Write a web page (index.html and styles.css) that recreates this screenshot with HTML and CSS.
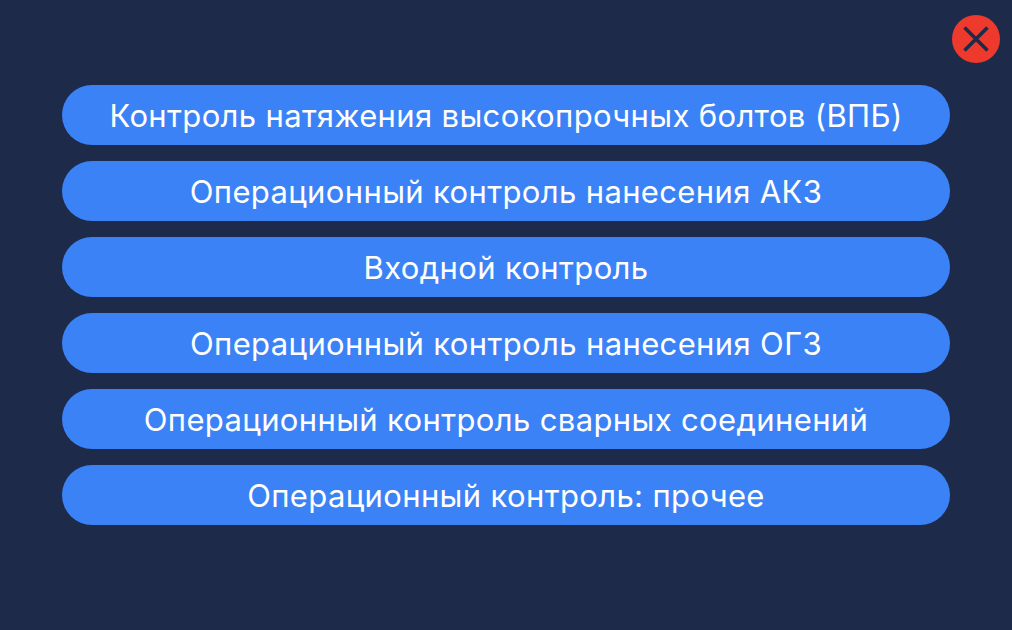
FILE: index.html
```
<!DOCTYPE html>
<html lang="ru">
<head>
<meta charset="utf-8">
<title>Контроль</title>
<link rel="stylesheet" href="styles.css">
</head>
<body>
<main class="panel">
  <header class="top">
    <button class="close" aria-label="Закрыть">
      <svg viewBox="0 0 48 48" width="48" height="48"><circle cx="24" cy="24" r="24" fill="#ee3a2c"/><path d="M12.5 12.5L35.5 35.5M35.5 12.5L12.5 35.5" stroke="#1e2a4a" stroke-width="3.6" fill="none"/></svg>
    </button>
  </header>
  <nav class="list">
    <button class="item">Контроль натяжения высокопрочных болтов (ВПБ)</button>
    <button class="item">Операционный контроль нанесения АКЗ</button>
    <button class="item">Входной контроль</button>
    <button class="item">Операционный контроль нанесения ОГЗ</button>
    <button class="item">Операционный контроль сварных соединений</button>
    <button class="item">Операционный контроль: прочее</button>
  </nav>
</main>
</body>
</html>
```
FILE: styles.css
```
* { box-sizing: border-box; }
html, body { margin: 0; height: 100%; }
body { background: #1e2a4a; font-family: Inter, "Liberation Sans", sans-serif; }
.panel { width: 1012px; height: 630px; padding: 15px 12px 0 62px; display: flex; flex-direction: column; background: #1e2a4a; }
.top { display: flex; justify-content: flex-end; height: 70px; flex: none; }
.close { width: 48px; height: 48px; padding: 0; border: 0; background: none; display: block; }
.close svg { display: block; }
.list { width: 888px; display: flex; flex-direction: column; gap: 16px; }
.item { height: 60px; border: 0; border-radius: 30px; background: #3b82f6; color: #fff; font: 400 31px/62px Inter, "Liberation Sans", sans-serif; letter-spacing: 0.36px; text-align: center; padding: 0; white-space: nowrap; }
```
